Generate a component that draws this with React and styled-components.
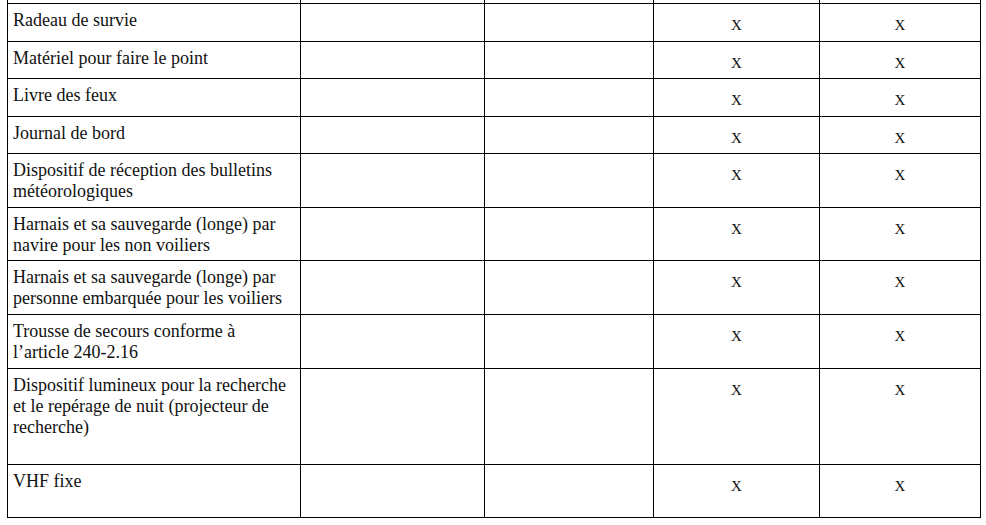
import { styled, createGlobalStyle } from "styled-components";

const GlobalStyle = createGlobalStyle`
  html, body {
    margin: 0;
    padding: 0;
    background: #fff;
  }
`;

const serif = `"Liberation Serif", "Times New Roman", Times, serif`;

const Page = styled.div`
  width: 986px;
  height: 525px;
  overflow: hidden;
  padding-left: 7px;
  box-sizing: border-box;
  font-family: ${serif};
  color: #111;
`;

const Table = styled.table`
  border-collapse: collapse;
  table-layout: fixed;
  width: 973px;
  font-family: ${serif};
`;

const Stub = styled.td`
  height: 3px;
  padding: 0;
  border-left: 1px solid #000;
  border-right: 1px solid #000;
`;

const Row = styled.tr`
  height: ${({ $h }) => $h}px;
`;

const Label = styled.td`
  border: 1px solid #000;
  vertical-align: top;
  padding: 6px 9px 0 5px;
  font-family: ${serif};
  font-size: 18px;
  line-height: 21px;
  color: #111;
`;

const Empty = styled.td`
  border: 1px solid #000;
`;

const Mark = styled.td`
  border: 1px solid #000;
  vertical-align: top;
  text-align: center;
  padding: 12px 0 0 0;
  font-family: ${serif};
  font-size: 15px;
  line-height: 18px;
  color: #111;
`;

const rows = [
  { label: "Radeau de survie", h: 38 },
  { label: "Matériel pour faire le point", h: 37 },
  { label: "Livre des feux", h: 38 },
  { label: "Journal de bord", h: 37 },
  { label: "Dispositif de réception des bulletins météorologiques", h: 54 },
  { label: "Harnais et sa sauvegarde (longe) par navire pour les non voiliers", h: 53 },
  { label: "Harnais et sa sauvegarde (longe) par personne embarquée pour les voiliers", h: 54 },
  { label: "Trousse de secours conforme à l’article 240-2.16", h: 54 },
  { label: "Dispositif lumineux pour la recherche et le repérage de nuit (projecteur de recherche)", h: 96 },
  { label: "VHF fixe", h: 53 },
];

export default function App() {
  return (
    <Page>
      <GlobalStyle />
      <Table>
        <colgroup>
          <col style={{ width: 293 }} />
          <col style={{ width: 184 }} />
          <col style={{ width: 169 }} />
          <col style={{ width: 166 }} />
          <col style={{ width: 161 }} />
        </colgroup>
        <tbody>
          <tr>
            <Stub />
            <Stub />
            <Stub />
            <Stub />
            <Stub />
          </tr>
          {rows.map((r) => (
            <Row key={r.label} $h={r.h}>
              <Label>{r.label}</Label>
              <Empty />
              <Empty />
              <Mark>X</Mark>
              <Mark>X</Mark>
            </Row>
          ))}
        </tbody>
      </Table>
    </Page>
  );
}
